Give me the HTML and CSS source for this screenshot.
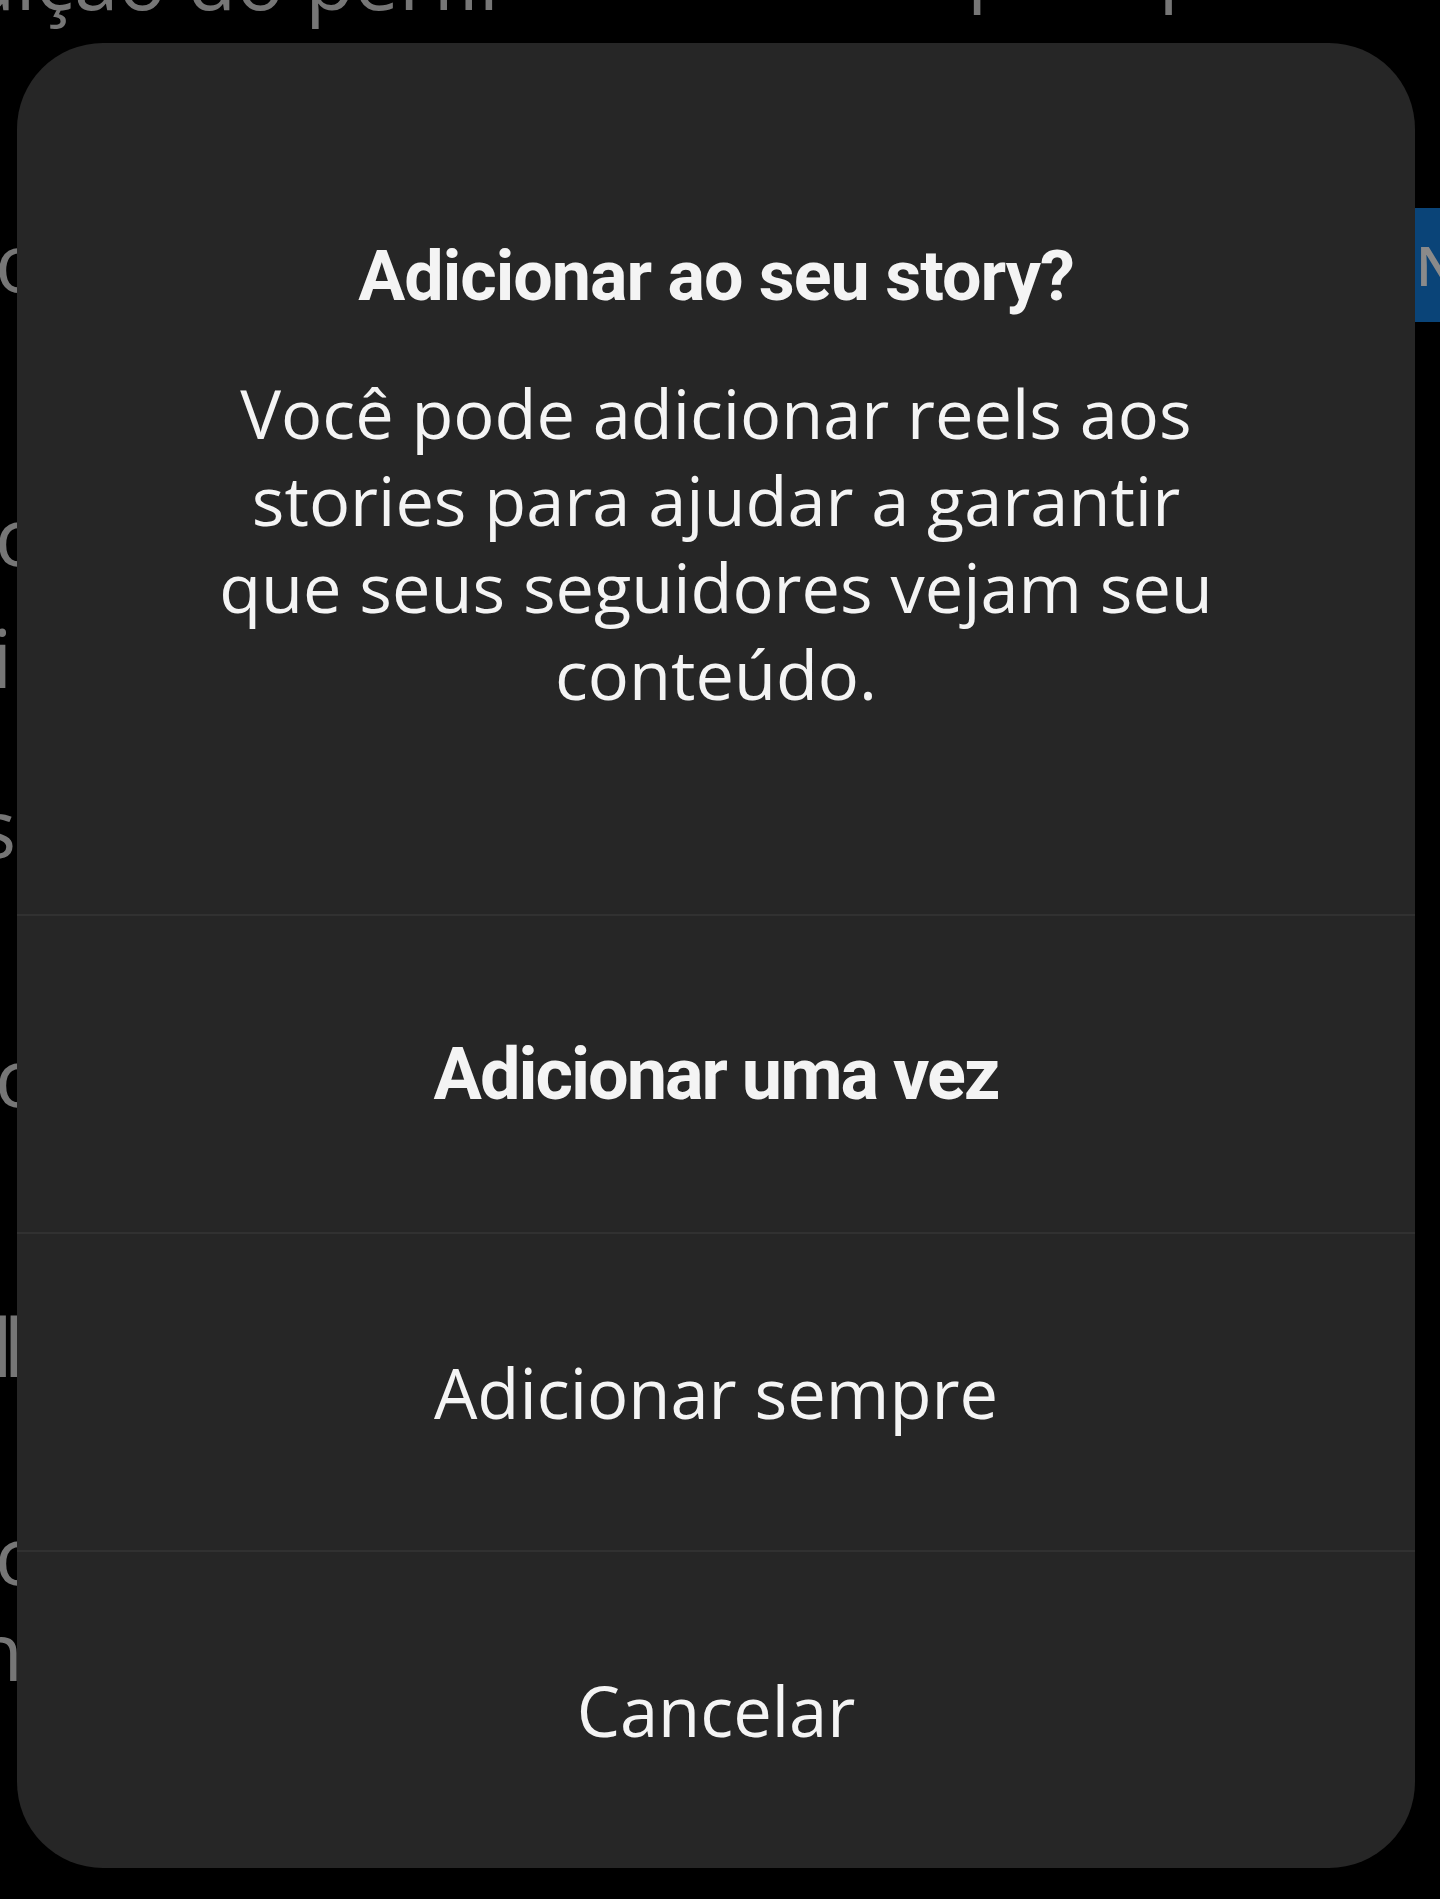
FILE: index.html
```html
<!DOCTYPE html>
<html lang="pt-BR">
<head>
<meta charset="utf-8">
<title>Adicionar ao seu story?</title>
<link rel="stylesheet" href="styles.css">
</head>
<body>
<div class="backdrop">
  <div class="bg-top">Edição do perfil</div>
  <div class="bg-top-right">Ver para pessoas</div>
  <span class="bg-line l1">ocultar</span>
  <span class="bg-line l2">categoria</span>
  <span class="bg-line l3">informações</span>
  <span class="bg-line l4">sobre</span>
  <span class="bg-line l5">contato</span>
  <span class="bg-line l6">all</span>
  <span class="bg-line l7">conta</span>
  <span class="bg-line l8">nome</span>
  <div class="bg-button">Novo</div>
</div>

<div class="dialog" role="dialog" aria-labelledby="dlg-title">
  <div class="dialog-header">
    <h1 id="dlg-title" class="dialog-title">Adicionar ao seu story?</h1>
    <p class="dialog-text">Você pode adicionar reels aos<br>stories para ajudar a garantir<br>que seus seguidores vejam seu<br>conteúdo.</p>
  </div>
  <button class="dialog-action primary">Adicionar uma vez</button>
  <button class="dialog-action">Adicionar sempre</button>
  <button class="dialog-action">Cancelar</button>
</div>
</body>
</html>
```
FILE: styles.css
```css
html, body {
  margin: 0;
  padding: 0;
  background: #000;
}
body {
  width: 1440px;
  height: 1899px;
  overflow: hidden;
  position: relative;
  font-family: "Open Sans", "Noto Sans", sans-serif;
}

/* underlying page, mostly hidden by the dialog */
.backdrop {
  position: absolute;
  inset: 0;
  color: #767676;
}
.bg-top,
.bg-top-right {
  position: absolute;
  font-size: 80px;
  line-height: 80px;
  white-space: nowrap;
}
.bg-top {
  left: -78px;
  top: -61px;
}
.bg-top-right {
  left: 821px;
  top: -75px;
}
.bg-line {
  position: absolute;
  font-size: 80px;
  line-height: 80px;
  white-space: nowrap;
  left: -5px;
}
.l1 { top: 221px; }
.l2 { top: 495px; }
.l3 { top: 617px; left: -8px; }
.l4 { top: 787px; left: -22px; }
.l5 { top: 1036px; }
.l6 { top: 1306px; left: -43px; letter-spacing: -9px; }
.l7 { top: 1514px; }
.l8 { top: 1610px; left: -26px; }
.bg-button {
  position: absolute;
  left: 1396px;
  top: 208px;
  width: 160px;
  height: 114px;
  border-radius: 14px;
  background: #0a4478;
  color: #8a8a8a;
  font-size: 54px;
  font-weight: 600;
  line-height: 114px;
  padding-left: 20px;
  box-sizing: border-box;
}

/* dialog */
.dialog {
  position: absolute;
  left: 17px;
  top: 43px;
  width: 1398px;
  height: 1825px;
  background: #262626;
  border-radius: 86px;
  overflow: hidden;
  display: flex;
  flex-direction: column;
  color: #f4f4f4;
}
.dialog-header {
  height: 873px;
  box-sizing: border-box;
  display: flex;
  flex-direction: column;
  align-items: center;
  padding-top: 193px;
  border-bottom: 2px solid #313131;
}
.dialog-title {
  margin: 0;
  font-family: Roboto, "Liberation Sans", sans-serif;
  font-weight: 700;
  font-size: 70px;
  line-height: 80px;
  letter-spacing: -1px;
}
.dialog-text {
  margin: 53px 0 0;
  text-align: center;
  font-size: 68.5px;
  line-height: 87px;
}
.dialog-action {
  flex: 1 1 0;
  border: 0;
  background: transparent;
  color: #f4f4f4;
  font-family: "Open Sans", "Noto Sans", sans-serif;
  font-size: 68.7px;
  padding: 0;
  margin: 0;
  border-bottom: 2px solid #313131;
}
.dialog-action:last-child {
  border-bottom: 0;
}
.dialog-action.primary {
  font-family: Roboto, "Liberation Sans", sans-serif;
  font-weight: 700;
  font-size: 72px;
  letter-spacing: -2px;
}
```
